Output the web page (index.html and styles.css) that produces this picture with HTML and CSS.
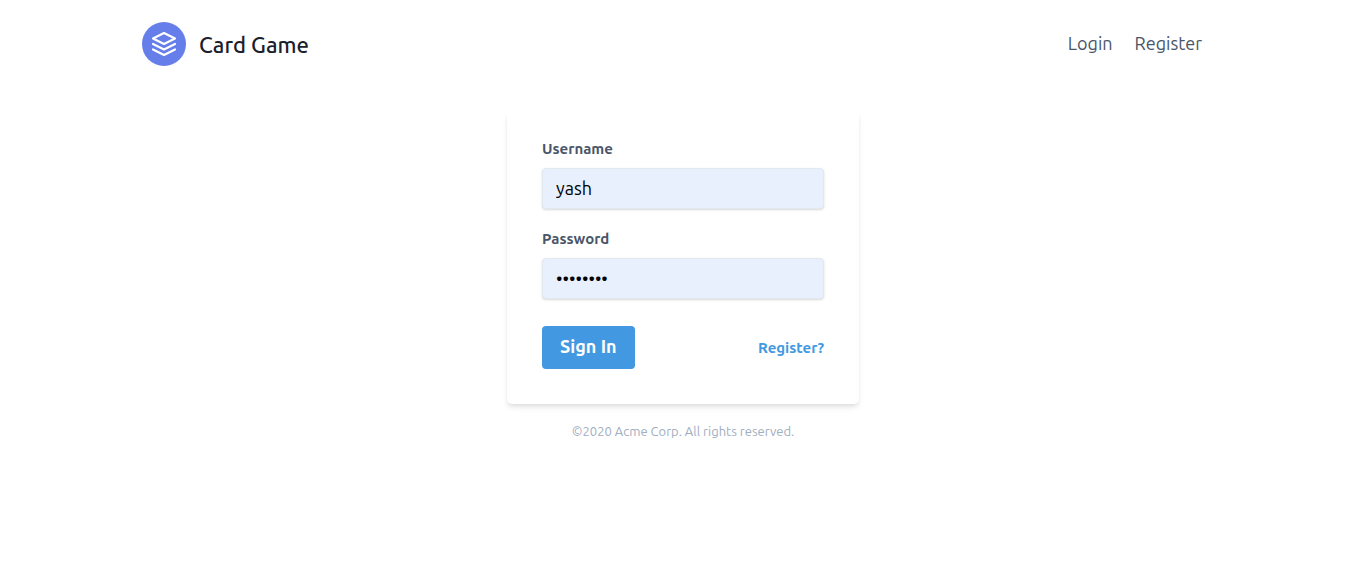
FILE: index.html
```
<!DOCTYPE html>
<html lang="en">
<head>
<meta charset="utf-8">
<meta name="viewport" content="width=device-width, initial-scale=1">
<title>Card Game</title>
<link rel="stylesheet" href="styles.css">
</head>
<body>
<header class="header">
  <a class="brand" href="#">
    <svg class="brand-icon" viewBox="0 0 40 40" aria-hidden="true">
      <circle cx="20" cy="20" r="20" fill="#667eea"/>
      <path transform="translate(8 8)" d="M12 2L2 7l10 5 10-5-10-5zM2 17l10 5 10-5M2 12l10 5 10-5" fill="none" stroke="#fff" stroke-width="2" stroke-linecap="round" stroke-linejoin="round"/>
    </svg>
    <span class="brand-name">Card Game</span>
  </a>
  <nav class="nav">
    <a class="nav-link" href="#">Login</a>
    <a class="nav-link" href="#">Register</a>
  </nav>
</header>
<main class="main">
  <form class="card">
    <div class="field">
      <label class="label" for="username">Username</label>
      <input class="input" id="username" type="text" value="yash">
    </div>
    <div class="field">
      <label class="label" for="password">Password</label>
      <input class="input" id="password" type="password" value="password">
    </div>
    <div class="actions">
      <button class="button" type="button">Sign In</button>
      <a class="register-link" href="#">Register?</a>
    </div>
  </form>
  <p class="copyright">©2020 Acme Corp. All rights reserved.</p>
</main>
</body>
</html>
```
FILE: styles.css
```
*, *::before, *::after { box-sizing: border-box; }

body {
  margin: 0;
  background: #fff;
  color: #4a5568;
  font: 18px/26px Ubuntu, "Noto Sans", "Open Sans", sans-serif;
}

a { color: inherit; text-decoration: none; }

.header {
  display: flex;
  align-items: center;
  justify-content: space-between;
  max-width: 1126px;
  margin: 0 auto;
  padding: 22px;
}

.brand { display: flex; align-items: center; gap: 13px; color: #1a202c; }
.brand-icon { width: 44px; height: 44px; }
.brand-name { padding-top: 2px; font-size: 22px; font-weight: 500; }

.nav { display: flex; gap: 22px; padding: 0 22px 2px 0; }

.main { max-width: 352px; margin: 24px auto 0; }

.card {
  display: flex;
  flex-direction: column;
  gap: 19px;
  padding: 26px 35px 35px;
  border-radius: 5px;
  background: #fff;
  box-shadow: 0 4px 6px -1px rgba(0, 0, 0, .1), 0 2px 4px -1px rgba(0, 0, 0, .06);
}

.field { display: flex; flex-direction: column; gap: 9px; }
.label { font-size: 15px; line-height: 21px; font-weight: 700; }

.input {
  width: 100%;
  height: 41px;
  padding: 7px 13px 9px;
  border: 1px solid #e2e8f0;
  border-radius: 4px;
  background: #e8f0fe;
  color: #000;
  font: inherit;
  box-shadow: 0 1px 3px rgba(0, 0, 0, .1), 0 1px 2px rgba(0, 0, 0, .06);
}

.actions {
  display: flex;
  align-items: center;
  justify-content: space-between;
  padding-top: 8px;
}

.button {
  padding: 7px 18px 10px;
  border: 0;
  border-radius: 4px;
  background: #4299e1;
  color: #fff;
  font: inherit;
  font-weight: 700;
  cursor: pointer;
}

.register-link { color: #4299e1; font-size: 15px; font-weight: 700; }

.copyright {
  margin: 17px 0 0;
  color: #a0aec0;
  font-size: 13px;
  line-height: 20px;
  text-align: center;
}
```
